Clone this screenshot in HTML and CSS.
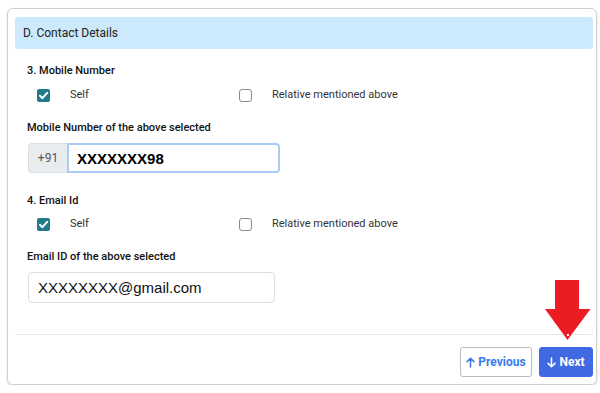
FILE: index.html
```html
<!DOCTYPE html>
<html>
<head>
<meta charset="utf-8">
<link rel="stylesheet" href="styles.css">
</head>
<body>
<div class="card">
  <div class="card-head">D. Contact Details</div>
  <div class="card-body">
    <div class="q-title">3. Mobile Number</div>
    <div class="check-row">
      <label class="opt"><span class="box checked"><svg viewBox="0 0 13 13" width="13" height="13"><path d="M3 6.8 L5.4 9.2 L10.2 3.8" fill="none" stroke="#fff" stroke-width="2" stroke-linecap="round" stroke-linejoin="round"/></svg></span>Self</label>
      <label class="opt"><span class="box"></span>Relative mentioned above</label>
    </div>
    <div class="field-label">Mobile Number of the above selected</div>
    <div class="input-group">
      <span class="addon">+91</span>
      <span class="input focus">XXXXXXX98</span>
    </div>
    <div class="q-title q2">4. Email Id</div>
    <div class="check-row">
      <label class="opt"><span class="box checked"><svg viewBox="0 0 13 13" width="13" height="13"><path d="M3 6.8 L5.4 9.2 L10.2 3.8" fill="none" stroke="#fff" stroke-width="2" stroke-linecap="round" stroke-linejoin="round"/></svg></span>Self</label>
      <label class="opt"><span class="box"></span>Relative mentioned above</label>
    </div>
    <div class="field-label">Email ID of the above selected</div>
    <div class="email">XXXXXXXX@gmail.com</div>
  </div>
  <div class="card-foot">
    <button class="btn btn-prev"><svg viewBox="0 0 10 12" width="9" height="11"><path d="M5 11 V1.5 M1.2 5 L5 1.2 L8.8 5" fill="none" stroke="currentColor" stroke-width="1.7" stroke-linecap="round" stroke-linejoin="round"/></svg>Previous</button>
    <button class="btn btn-next"><svg viewBox="0 0 10 12" width="9" height="11"><path d="M5 1 V10.5 M1.2 7 L5 10.8 L8.8 7" fill="none" stroke="currentColor" stroke-width="1.7" stroke-linecap="round" stroke-linejoin="round"/></svg>Next</button>
  </div>
  <svg class="pointer" viewBox="0 0 46 61" width="46" height="61"><path d="M10 0 H34 V29 H45.5 L22.5 60 L0 29 H10 Z" fill="#ec1c24"/><rect x="22" y="54" width="2" height="2" fill="#fff"/></svg>
</div>
</body>
</html>
```
FILE: styles.css
```css
* { box-sizing: border-box; }
html, body { margin: 0; padding: 0; background: #fff; }
body {
  font-family: Roboto, "Liberation Sans", Arial, sans-serif;
  color: #212529;
  padding: 8px 3px 0 7px;
}
.card {
  position: relative;
  width: 590px;
  height: 377px;
  border: 1px solid #cfcfcf;
  border-radius: 6px;
  box-shadow: 0 1px 2px rgba(0,0,0,0.18);
  padding: 8px 3px 0 7px;
  display: flex;
  flex-direction: column;
}
.card-head {
  height: 32px;
  background: #cde9fc;
  border-radius: 3px;
  display: flex;
  align-items: center;
  padding-left: 8px;
  font-size: 12px;
  color: #222;
}
.card-body {
  height: 285px;
  padding: 14px 0 0 12px;
  display: flex;
  flex-direction: column;
  align-items: flex-start;
}
.q-title {
  font-size: 11px;
  font-weight: 500;
  line-height: 16px;
  color: #111;
}
.q2 { margin-top: 20px; }
.check-row {
  display: grid;
  grid-template-columns: 202px auto;
  margin: 8px 0 0 10px;
  line-height: 16px;
  font-size: 11px;
  color: #333;
}
.q2 + .check-row { margin-top: 7px; }
.opt { display: flex; align-items: center; gap: 20px; }
.box {
  width: 13px;
  height: 13px;
  border: 1px solid #8a8a8a;
  border-radius: 3px;
  background: #fff;
  display: block;
}
.box.checked {
  border: none;
  border-radius: 2px;
  background: #1f7a8a;
}
.box svg { display: block; }
.field-label {
  margin-top: 17px;
  font-size: 11px;
  font-weight: 500;
  line-height: 16px;
  color: #111;
}
.input-group {
  display: flex;
  margin: 7px 0 0 1px;
  height: 30px;
}
.addon {
  width: 39px;
  background: #e9ecef;
  border: 1px solid #dcdfe3;
  border-right: none;
  border-radius: 4px 0 0 4px;
  display: flex;
  align-items: center;
  justify-content: center;
  font-size: 12px;
  color: #555;
}
.input {
  width: 213px;
  border: 2px solid #a9ccf7;
  border-radius: 0 4px 4px 0;
  display: flex;
  align-items: center;
  padding-left: 8px;
  font-family: "Liberation Sans", Arial, sans-serif;
  font-weight: bold;
  font-size: 15px;
  color: #000;
}
.email {
  margin: 7px 0 0 1px;
  width: 247px;
  height: 31px;
  border: 1px solid #dcdfe3;
  border-radius: 4px;
  display: flex;
  align-items: center;
  padding-left: 9px;
  font-family: "Liberation Sans", Arial, sans-serif;
  font-size: 15px;
  color: #111;
}
.card-foot {
  border-top: 1px solid #e6e6e6;
  padding-top: 12px;
  display: flex;
  justify-content: flex-end;
  gap: 7px;
}
.btn {
  height: 30px;
  border-radius: 3px;
  font-family: Roboto, "Liberation Sans", Arial, sans-serif;
  font-size: 12px;
  font-weight: bold;
  display: flex;
  align-items: center;
  justify-content: center;
  gap: 3px;
  padding: 0;
  margin: 0;
}
.btn svg { display: block; }
.btn-prev {
  width: 72px;
  background: #fff;
  border: 1px solid #bdbdbd;
  color: #3a7bf0;
}
.btn-next {
  width: 54px;
  background: #4169e1;
  border: 1px solid #4169e1;
  color: #fff;
}
.pointer {
  position: absolute;
  left: 537px;
  top: 271px;
}
```
